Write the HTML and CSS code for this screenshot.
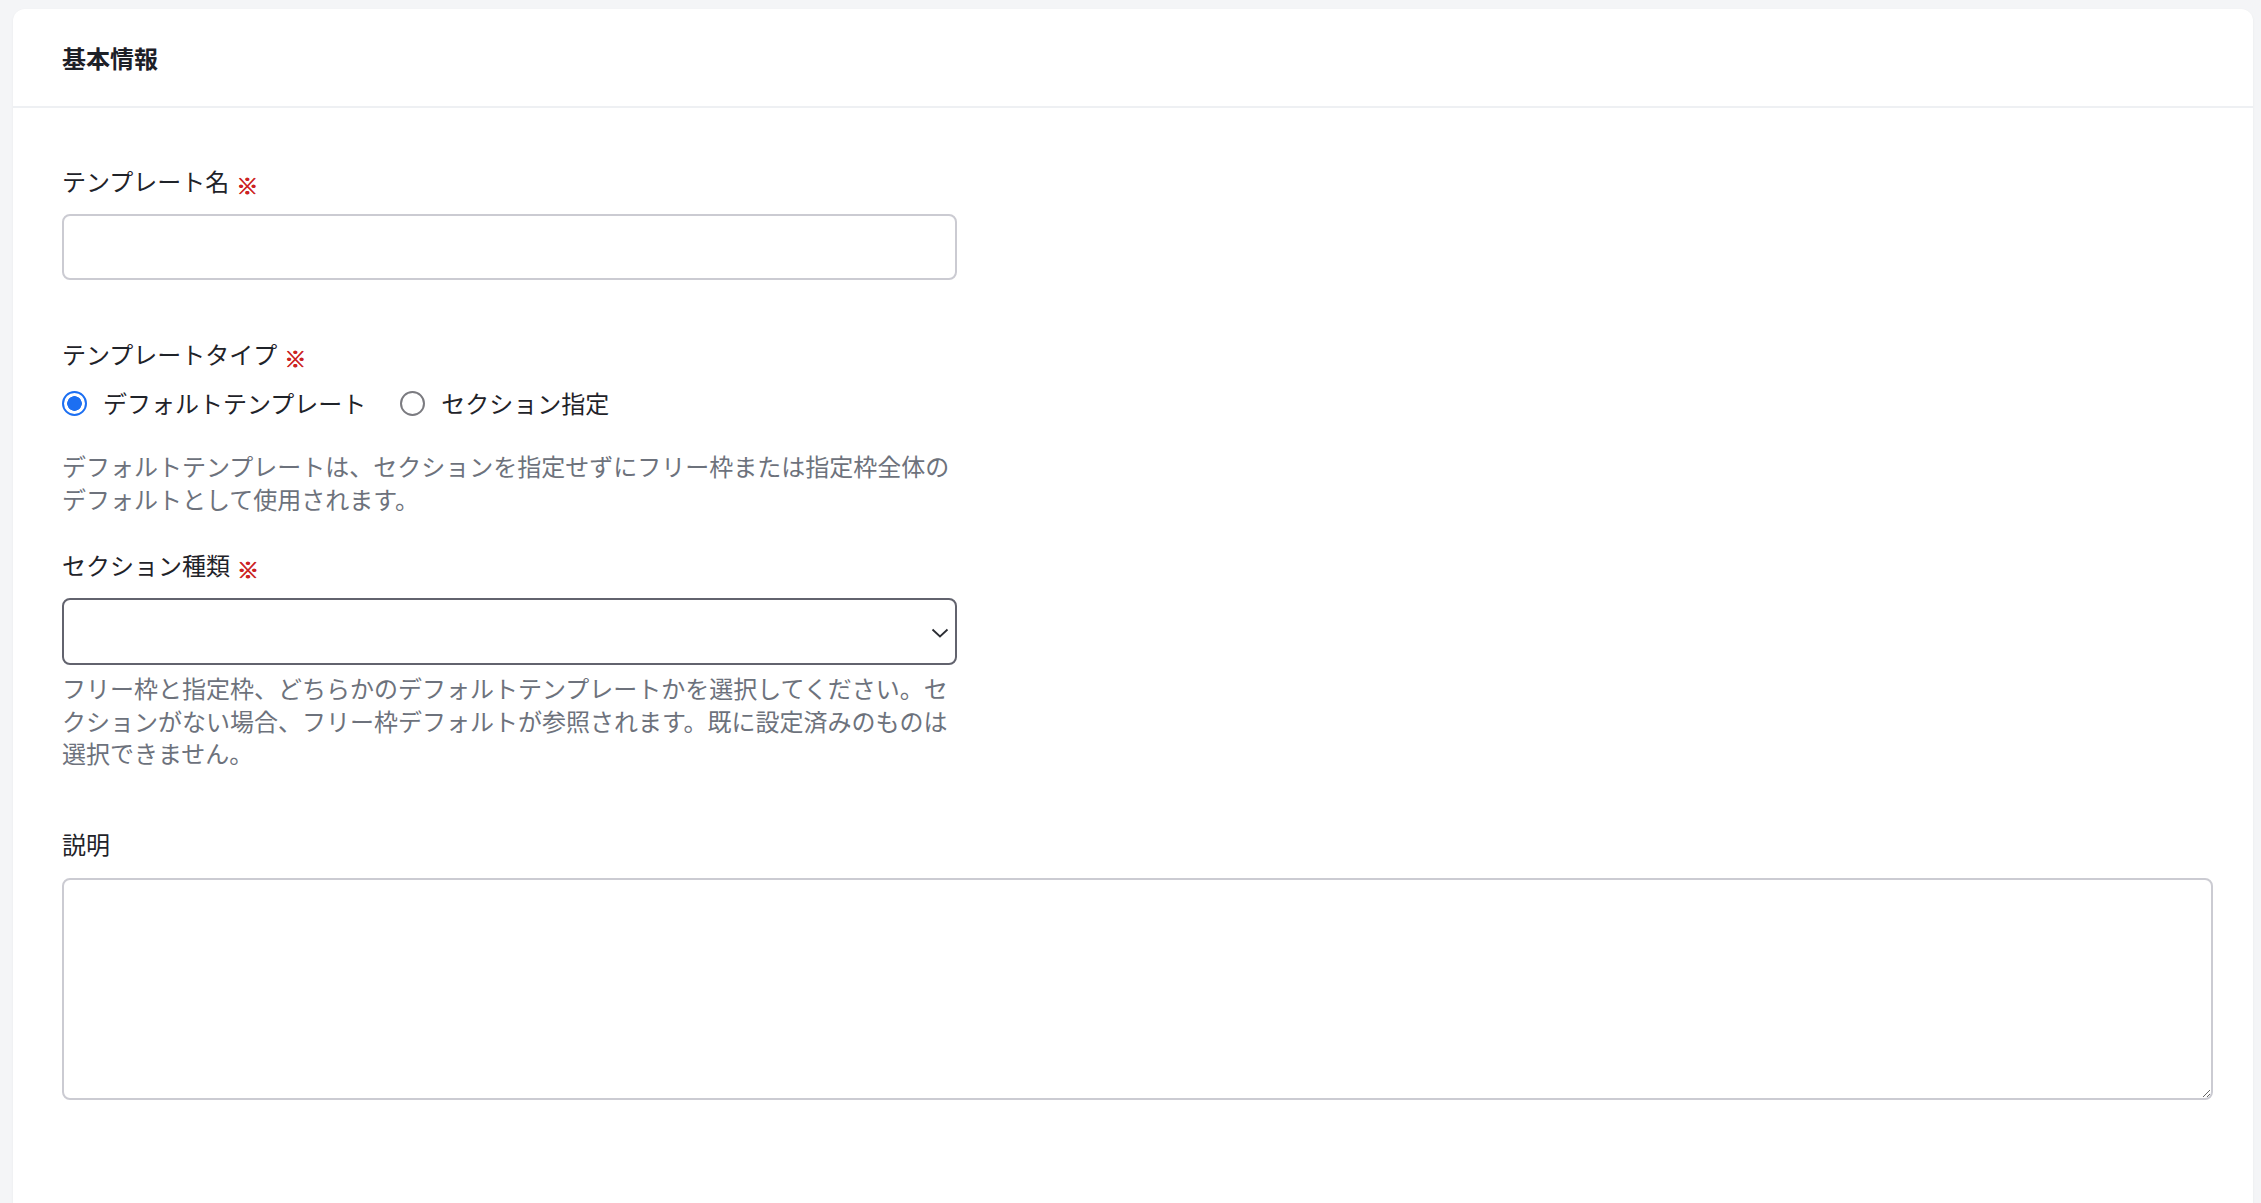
FILE: index.html
```html
<!DOCTYPE html>
<html lang="ja">
<head>
  <meta charset="UTF-8">
  <title>テンプレート編集</title>
  <meta name="viewport" content="width=device-width, initial-scale=1">
  <link rel="stylesheet" href="styles.css">
</head>
<body>
  <div class="card">
    <div class="card-header">
      <h2>基本情報</h2>
    </div>
    <form class="card-body">
      <div class="field">
        <label class="field-label" for="name">テンプレート名<span class="req">※</span></label>
        <input type="text" id="name" class="text-input">
      </div>

      <div class="field field-type">
        <span class="field-label">テンプレートタイプ<span class="req">※</span></span>
        <div class="radios">
          <label class="radio"><input type="radio" name="type" checked> デフォルトテンプレート</label>
          <label class="radio"><input type="radio" name="type"> セクション指定</label>
        </div>
        <p class="help help-type">デフォルトテンプレートは、セクションを指定せずにフリー枠または指定枠全体のデフォルトとして使用されます。</p>
      </div>

      <div class="field field-section">
        <label class="field-label" for="section">セクション種類<span class="req">※</span></label>
        <div class="select-wrap">
          <select id="section" class="select-input">
            <option></option>
          </select>
          <svg class="chevron" width="18" height="10" viewBox="0 0 18 10"><polyline points="1.5,1.5 9,8.5 16.5,1.5" fill="none" stroke="#2b2d33" stroke-width="1.8"/></svg>
        </div>
        <p class="help help-section">フリー枠と指定枠、どちらかのデフォルトテンプレートかを選択してください。セクションがない場合、フリー枠デフォルトが参照されます。既に設定済みのものは選択できません。</p>
      </div>

      <div class="field field-desc">
        <label class="field-label" for="desc">説明</label>
        <textarea id="desc" class="textarea"></textarea>
      </div>
    </form>
  </div>
</body>
</html>
```

FILE: styles.css
```css
body {
  margin: 0;
  background: #f4f5f7;
  font-family: "Noto Sans CJK JP", "Noto Sans", sans-serif;
  color: #1f2329;
}
.card {
  margin: 9px 8px 0 13px;
  min-height: 1240px;
  background: #fff;
  border-radius: 12px 12px 0 0;
  box-shadow: 0 1px 3px rgba(0,0,0,0.05);
}
.card-header {
  height: 97px;
  display: flex;
  align-items: center;
  padding: 0 49px;
  border-bottom: 2px solid #eef0f3;
}
.card-header h2 {
  margin: 0;
  font-size: 24px;
  font-weight: 700;
  color: #1d2027;
}
.card-body {
  padding: 56px 49px 0 49px;
}
.field {
  display: flex;
  flex-direction: column;
}
.field-label {
  font-size: 24px;
  line-height: 34px;
  height: 34px;
  color: #1f2329;
  display: flex;
  align-items: center;
}
/* required mark, drawn heavier than the label text */
.req {
  color: #cc2222;
  font-size: 22px;
  line-height: 1;
  font-weight: 700;
  margin-left: 7px;
  padding-top: 6px;
  text-shadow: 0.4px 0 0 #cc2222, -0.4px 0 0 #cc2222;
}
.text-input, .select-input {
  width: 895px;
  height: 66px;
  box-sizing: border-box;
  border: 2px solid #cbcbd2;
  border-radius: 8px;
  background: #fff;
  font: inherit;
  font-size: 24px;
  padding: 0 16px;
  outline: none;
}
.text-input {
  margin-top: 16px;
}
.field-type, .field-desc {
  margin-top: 57px;
}
.radios {
  display: flex;
  gap: 34px;
  margin-top: 14px;
  height: 36px;
  align-items: center;
}
.radio {
  display: flex;
  align-items: center;
  gap: 8px;
  font-size: 24px;
  line-height: 36px;
  color: #1f2329;
}
.radio input {
  appearance: none;
  -webkit-appearance: none;
  width: 25px;
  height: 25px;
  margin: 0 8px 0 0;
  border: 2px solid #7b7b80;
  border-radius: 50%;
  background: #fff;
  box-sizing: border-box;
}
.radio input:checked {
  border-color: #1c6ff2;
  background: radial-gradient(circle, #1c6ff2 0 7px, #fff 7.6px);
}
.help {
  width: 895px;
  margin: 0;
  font-size: 24px;
  line-height: 32.5px;
  color: #6d727c;
}
.help-type {
  margin-top: 29px;
}
.field-section {
  margin-top: 33px;
}
.select-wrap {
  position: relative;
  width: 895px;
  margin-top: 16px;
}
.select-input {
  appearance: none;
  -webkit-appearance: none;
  height: 67px;
  border-color: #62636e;
  display: block;
}
.chevron {
  position: absolute;
  right: 8px;
  top: 50%;
  margin-top: -4px;
}
.help-section {
  margin-top: 7px;
}
.textarea {
  width: 2151px;
  height: 222px;
  box-sizing: border-box;
  margin-top: 17px;
  border: 2px solid #cbcbd2;
  border-radius: 8px;
  font: inherit;
  font-size: 24px;
  padding: 12px 16px;
  resize: vertical;
  outline: none;
}
```
